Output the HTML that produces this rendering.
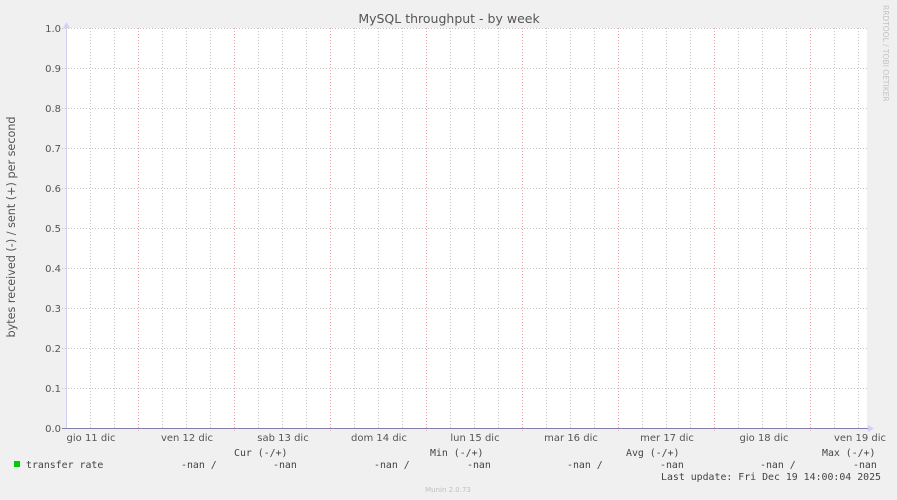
<!DOCTYPE html>
<html><head><meta charset="utf-8"><style>
html,body{margin:0;padding:0;background:#f0f0f0;}
svg{display:block;font-family:"DejaVu Sans","Liberation Sans",sans-serif;}
.m{font-family:"DejaVu Sans Mono","Liberation Mono",monospace;font-size:9.9px;fill:#444;}
</style></head><body>
<svg width="897" height="500" viewBox="0 0 897 500" xmlns="http://www.w3.org/2000/svg">
<rect width="897" height="500" fill="#f0f0f0"/>
<rect x="66" y="28" width="801" height="400" fill="#fff"/>
<path d="M90.5 28V428M114.5 28V428M162.5 28V428M186.5 28V428M210.5 28V428M258.5 28V428M282.5 28V428M306.5 28V428M354.5 28V428M378.5 28V428M402.5 28V428M450.5 28V428M474.5 28V428M498.5 28V428M546.5 28V428M570.5 28V428M594.5 28V428M642.5 28V428M666.5 28V428M690.5 28V428M738.5 28V428M762.5 28V428M786.5 28V428M834.5 28V428M858.5 28V428" stroke="#c8c8c8" stroke-width="1" stroke-dasharray="1,2"/>
<path d="M62 28.5H869M62 68.5H869M62 108.5H869M62 148.5H869M62 188.5H869M62 228.5H869M62 268.5H869M62 308.5H869M62 348.5H869M62 388.5H869" stroke="#c0c0c0" stroke-width="1" stroke-dasharray="1,2"/>
<path d="M138.5 28V432M234.5 28V432M330.5 28V432M426.5 28V432M522.5 28V432M618.5 28V432M714.5 28V432M810.5 28V432" stroke="#f0a0a0" stroke-width="1" stroke-dasharray="1,2"/>
<path d="M66.5 24V428" stroke="#d0d0f0" stroke-width="1"/>
<path d="M63 22L66.5 28L70 22Z" fill="#d0d0f8" transform="rotate(180 66.5 25)"/>
<path d="M62 428.5H869" stroke="#8080a8" stroke-width="1"/>
<path d="M868 425L874 428.5L868 432Z" fill="#d0d0f8"/>
<text x="449" y="23" text-anchor="middle" font-size="12.5" fill="#555">MySQL throughput - by week</text>
<g font-size="10" fill="#555" text-anchor="end">
<text x="61" y="32">1.0</text><text x="61" y="72">0.9</text><text x="61" y="112">0.8</text><text x="61" y="152">0.7</text><text x="61" y="192">0.6</text><text x="61" y="232">0.5</text><text x="61" y="272">0.4</text><text x="61" y="312">0.3</text><text x="61" y="352">0.2</text><text x="61" y="392">0.1</text><text x="61" y="432">0.0</text>
</g>
<text transform="translate(15 227) rotate(-90)" text-anchor="middle" font-size="11.2" fill="#555">bytes received (-) / sent (+) per second</text>
<g font-size="10" fill="#555" text-anchor="middle">
<text x="91" y="441">gio 11 dic</text><text x="187" y="441">ven 12 dic</text><text x="283" y="441">sab 13 dic</text><text x="379" y="441">dom 14 dic</text><text x="475" y="441">lun 15 dic</text><text x="571" y="441">mar 16 dic</text><text x="667" y="441">mer 17 dic</text><text x="764" y="441">gio 18 dic</text><text x="860" y="441">ven 19 dic</text>
</g>
<text transform="translate(883 5) rotate(90)" font-size="7.5" fill="#c4c4c4">RRDTOOL / TOBI OETIKER</text>
<rect x="14" y="461" width="6" height="6" fill="#00cc00"/>
<text class="m" x="26" y="468">transfer rate</text>
<text class="m" x="234" y="456">Cur (-/+)</text>
<text class="m" x="430" y="456">Min (-/+)</text>
<text class="m" x="626" y="456">Avg (-/+)</text>
<text class="m" x="822" y="456">Max (-/+)</text>
<text class="m" x="181" y="468">-nan /</text><text class="m" x="273" y="468">-nan</text>
<text class="m" x="374" y="468">-nan /</text><text class="m" x="467" y="468">-nan</text>
<text class="m" x="567" y="468">-nan /</text><text class="m" x="660" y="468">-nan</text>
<text class="m" x="760" y="468">-nan /</text><text class="m" x="853" y="468">-nan</text>
<text class="m" x="661" y="480">Last update: Fri Dec 19 14:00:04 2025</text>
<text x="448" y="492" text-anchor="middle" font-size="7" fill="#c0c0c0">Munin 2.0.73</text>
</svg>
</body></html>
